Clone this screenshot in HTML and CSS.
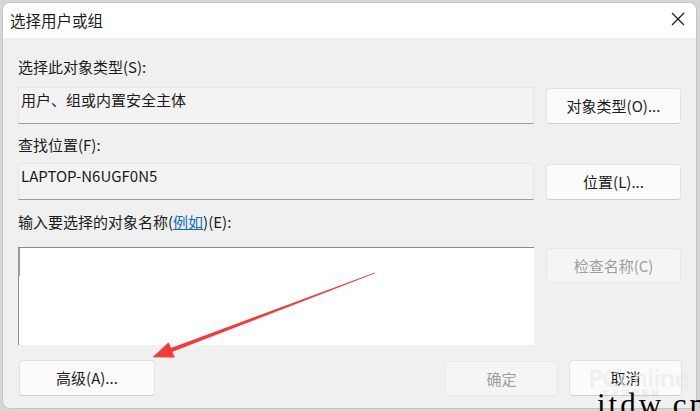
FILE: index.html
```html
<!DOCTYPE html>
<html lang="zh-CN">
<head>
<meta charset="utf-8">
<title>选择用户或组</title>
<link rel="stylesheet" href="styles.css">
</head>
<body>
<div class="window">
  <div class="titlebar">
    <span class="title">选择用户或组</span>
    <svg class="close" width="14" height="14" viewBox="0 0 14 14"><path d="M1 1 L13 13 M13 1 L1 13" stroke="#1a1a1a" stroke-width="1.2" fill="none"/></svg>
  </div>
  <div class="content">
    <div class="label l1">选择此对象类型(S):</div>
    <div class="row r1">
      <div class="field">用户、组或内置安全主体</div>
      <div class="btn">对象类型(O)...</div>
    </div>
    <div class="label l2">查找位置(F):</div>
    <div class="row r2">
      <div class="field">LAPTOP-N6UGF0N5</div>
      <div class="btn">位置(L)...</div>
    </div>
    <div class="label l3">输入要选择的对象名称(<a class="link">例如</a>)(E):</div>
    <div class="row r3">
      <div class="textarea"></div>
      <div class="btn disabled">检查名称(C)</div>
    </div>
    <div class="bottom">
      <div class="btn adv">高级(A)...</div>
      <div class="spacer"></div>
      <div class="btn disabled small">确定</div>
      <div class="btn small">取消</div>
    </div>
  </div>
</div>
<svg class="arrow" width="700" height="411" viewBox="0 0 700 411">
  <polygon points="375,272.6 171,348 168.6,342.2 152.5,357.2 174.8,357.6 172.4,351.8 375.2,273.3" fill="#f23b3b"/>
</svg>
<div class="wm-pc">PConline<span class="wm-sub">太平洋电脑网</span></div>
<div class="wm-it">itdw.cn</div>
</body>
</html>
```

FILE: styles.css
```css
* { box-sizing: border-box; }
html, body { margin: 0; padding: 0; }
body {
  width: 700px;
  height: 411px;
  overflow: hidden;
  background: #d6d6d6;
  font-family: "Noto Sans CJK SC", "Noto Sans", sans-serif;
  font-size: 15px;
  color: #1b1b1b;
  position: relative;
}
.window {
  margin: 2px 0 0 2px;
  width: 695px;
  height: 407px;
  border: 1px solid #c4c4c4;
  border-radius: 8px;
  overflow: hidden;
  background: #f0f0f0;
  display: flex;
  flex-direction: column;
}
.titlebar {
  height: 35px;
  background: #ffffff;
  display: flex;
  align-items: center;
  padding: 0 11px 0 7px;
  flex: none;
}
.title {
  font-size: 15.5px;
  line-height: 20px;
  flex: 1;
  margin-top: -1px;
}
.close { display: block; margin-top: -3px; }
.content {
  padding: 19px 14px 0 15px;
  display: flex;
  flex-direction: column;
}
.label {
  line-height: 20px;
  height: 20px;
  white-space: nowrap;
}
.l2 { margin-top: 11px; }
.l3 { margin-top: 12px; }
.link {
  color: #0f6cbd;
  text-decoration: underline;
}
.row {
  display: grid;
  grid-template-columns: 516px 135px;
  column-gap: 12px;
  align-items: start;
}
.r1 { margin-top: 10px; }
.r2 { margin-top: 8px; }
.r3 { margin-top: 15px; }
.field {
  height: 37px;
  background: #f3f3f3;
  border: 1px solid #e6e6e6;
  border-bottom: 1px solid #9c9c9c;
  padding: 0 0 0 2px;
  display: flex;
  align-items: center;
  line-height: 20px;
  padding-bottom: 12px;
  white-space: nowrap;
}
.btn {
  height: 36px;
  background: #fbfbfb;
  border: 1px solid #e2e2e2;
  border-bottom-color: #cfcfcf;
  border-radius: 4px;
  display: flex;
  align-items: center;
  justify-content: center;
  line-height: 20px;
  white-space: nowrap;
}
.r1 .btn, .r2 .btn { margin-top: 1px; }
.r3 .btn { margin-top: 1px; height: 35px; }
.btn.disabled {
  background: #f5f5f5;
  border-color: #e8e8e8;
  color: #9d9d9d;
}
.textarea {
  position: relative;
  height: 98px;
  background: #ffffff;
  border-top: 1px solid #8a8a8a;
  border-left: 1px solid #8a8a8a;
}
.textarea::before {
  content: "";
  position: absolute;
  left: -1px;
  top: 0;
  width: 2px;
  height: 28px;
  background: #9a9a9a;
}
.bottom {
  margin-top: 15px;
  display: flex;
  align-items: center;
  gap: 11px;
}
.btn.adv { width: 136px; margin-left: 1px; }
.spacer { flex: 1; }
.btn.small { width: 113px; }
.bottom .btn.disabled { height: 35px; margin-top: 1px; }
.arrow {
  position: absolute;
  left: 0;
  top: 0;
  pointer-events: none;
}
.wm-pc {
  position: absolute;
  left: 589px;
  top: 364px;
  font-family: "DejaVu Sans", sans-serif;
  font-size: 23px;
  line-height: 30px;
  color: rgba(255, 255, 255, 0.6);
  text-shadow: 0 0 1px rgba(150, 150, 150, 0.35);
  white-space: nowrap;
}
.wm-sub {
  position: absolute;
  left: 12px;
  top: 24px;
  font-size: 8px;
  line-height: 10px;
  color: rgba(170, 170, 170, 0.3);
  text-shadow: none;
  font-family: "Noto Sans CJK SC", sans-serif;
  letter-spacing: 2px;
}
.wm-it {
  position: absolute;
  left: 597px;
  top: 388px;
  font-family: "Liberation Serif", serif;
  font-size: 31px;
  line-height: 34px;
  color: #000;
  letter-spacing: 3px;
  white-space: nowrap;
}
```
